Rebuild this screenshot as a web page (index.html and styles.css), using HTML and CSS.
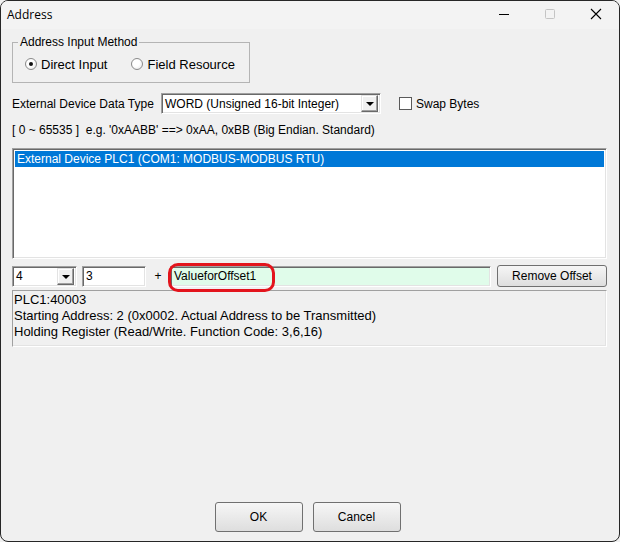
FILE: index.html
```html
<!DOCTYPE html>
<html lang="en">
<head>
    <meta charset="UTF-8">
    <title>Address</title>
    <link rel="stylesheet" href="styles.css">
</head>
<body>
    <div class="window">
        <!-- Bara de titlu -->
        <div class="titlebar">
            <span class="title">Address</span>
            <div class="caption-buttons">
                <span class="cap-btn">
                    <svg width="12" height="12" viewBox="0 0 12 12"><path d="M1 6.5 H11" stroke="#000" stroke-width="1"/></svg>
                </span>
                <span class="cap-btn">
                    <svg width="12" height="12" viewBox="0 0 12 12"><rect x="1.5" y="1.5" width="9" height="9" rx="1" fill="none" stroke="#c4c4c4"/></svg>
                </span>
                <span class="cap-btn">
                    <svg width="12" height="12" viewBox="0 0 12 12"><path d="M1 1 L11 11 M11 1 L1 11" stroke="#000" stroke-width="1.1"/></svg>
                </span>
            </div>
        </div>

        <div class="content">
            <fieldset class="group">
                <legend>Address Input Method</legend>
                <div class="radio-row">
                    <label class="radio-item"><span class="radio checked"></span>Direct Input</label>
                    <label class="radio-item"><span class="radio"></span>Field Resource</label>
                </div>
            </fieldset>

            <div class="type-row">
                <span class="type-label">External Device Data Type</span>
                <div class="combo sunken type-combo">
                    <span class="combo-text">WORD (Unsigned 16-bit Integer)</span>
                    <span class="combo-arrow"><span class="tri"></span></span>
                </div>
                <label class="check-item"><span class="checkbox"></span>Swap Bytes</label>
            </div>

            <div class="hint">[ 0 ~ 65535 ] &nbsp;e.g. '0xAABB' ==&gt; 0xAA, 0xBB (Big Endian. Standard)</div>

            <div class="listbox sunken">
                <div class="list-item selected">External Device PLC1 (COM1: MODBUS-MODBUS RTU)</div>
            </div>

            <div class="offset-row">
                <div class="combo sunken small-combo">
                    <span class="combo-text">4</span>
                    <span class="combo-arrow"><span class="tri"></span></span>
                </div>
                <div class="field sunken addr-field">3</div>
                <span class="plus">+</span>
                <div class="field sunken offset-field">
                    ValueforOffset1
                    <span class="marker"></span>
                </div>
                <button class="btn remove-btn">Remove Offset</button>
            </div>

            <div class="info">
                <div>PLC1:40003</div>
                <div>Starting Address: 2 (0x0002. Actual Address to be Transmitted)</div>
                <div>Holding Register (Read/Write. Function Code: 3,6,16)</div>
            </div>

            <div class="footer">
                <button class="btn dlg-btn">OK</button>
                <button class="btn dlg-btn">Cancel</button>
            </div>
        </div>
    </div>
</body>
</html>
```

FILE: styles.css
```css
body {
    margin: 0;
    background: #f0f0f0;
    font-family: 'Liberation Sans', Arial, sans-serif;
    font-size: 12px;
    color: #000;
}

.window {
    width: 620px;
    height: 542px;
    box-sizing: border-box;
    border: 1px solid #262626;
    border-radius: 8px;
    overflow: hidden;
    background: #f0f0f0;
    display: flex;
    flex-direction: column;
}

/* bara de titlu */
.titlebar {
    height: 28px;
    background: #f3f3f3;
    display: flex;
    align-items: center;
    justify-content: space-between;
    flex-shrink: 0;
}

.title {
    font-family: 'Open Sans', 'Noto Sans', sans-serif;
    font-size: 12px;
    padding-left: 6px;
    margin-top: -2px;
}

.caption-buttons {
    display: flex;
    margin-top: -2px;
}

.cap-btn {
    width: 46px;
    display: flex;
    justify-content: center;
}

.content {
    flex: 1;
    display: flex;
    flex-direction: column;
    padding: 0 12px 0 11px;
}

/* grupul de butoane radio */
.group {
    width: 238px;
    box-sizing: border-box;
    margin: 6px 0 0;
    padding: 7px 0 10px 12px;
    border: 1px solid #b4b4b4;
    border-radius: 0;
}

.group legend {
    padding: 0 2px;
    margin-left: -7px;
    line-height: 14px;
}

.radio-row {
    display: flex;
    gap: 24px;
    height: 16px;
    align-items: center;
    font-size: 13px;
}

.radio-item, .check-item {
    display: flex;
    align-items: center;
}

.radio {
    width: 12px;
    height: 12px;
    box-sizing: border-box;
    border: 1px solid #8a8a8a;
    border-radius: 50%;
    background: radial-gradient(circle at 40% 40%, #fff 40%, #e2e2e2);
    margin-right: 4px;
    position: relative;
}

.radio.checked::after {
    content: "";
    position: absolute;
    left: 3px;
    top: 3px;
    width: 4px;
    height: 4px;
    border-radius: 50%;
    background: #111;
}

.sunken {
    box-sizing: border-box;
    border: 1px solid;
    border-color: #a0a0a0 #fff #fff #a0a0a0;
    box-shadow: inset 1px 1px #696969, inset -1px -1px #e3e3e3;
    background: #fff;
}

.type-row {
    display: flex;
    align-items: center;
    margin-top: 10px;
    height: 21px;
}

.type-label {
    width: 149px;
    white-space: nowrap;
}

.combo {
    display: flex;
    align-items: center;
    justify-content: space-between;
    height: 21px;
    padding: 0 2px 0 3px;
}

.type-combo {
    width: 220px;
}

.combo-arrow {
    width: 17px;
    height: 17px;
    box-sizing: border-box;
    background: #f0f0f0;
    border: 1px solid;
    border-color: #e3e3e3 #696969 #696969 #e3e3e3;
    box-shadow: inset -1px -1px #a0a0a0, inset 1px 1px #fff;
    display: flex;
    align-items: center;
    justify-content: center;
}

.tri {
    width: 0;
    height: 0;
    border-left: 4px solid transparent;
    border-right: 4px solid transparent;
    border-top: 4px solid #000;
    margin-top: 1px;
}

.check-item {
    margin-left: 18px;
}

.checkbox {
    width: 13px;
    height: 13px;
    box-sizing: border-box;
    border: 1px solid #5a5a5a;
    background: #fff;
    margin-right: 4px;
}

.hint {
    margin-top: 9px;
    line-height: 14px;
}

.listbox {
    margin-top: 11px;
    height: 111px;
    padding: 2px;
}

.list-item {
    height: 16px;
    line-height: 16px;
    padding-left: 2px;
}

.list-item.selected {
    background: #0078d7;
    color: #fff;
}

.offset-row {
    display: flex;
    align-items: center;
    margin-top: 6px;
    height: 22px;
}

.small-combo {
    width: 65px;
}

.field {
    height: 21px;
    line-height: 19px;
    padding-left: 3px;
}

.addr-field {
    width: 64px;
    margin-left: 5px;
}

.plus {
    width: 24px;
    text-align: center;
}

.offset-field {
    width: 321px;
    background: #e0fcea;
    position: relative;
}

/* marcajul rosu peste camp */
.marker {
    position: absolute;
    left: -3px;
    top: -4px;
    width: 107px;
    height: 29px;
    box-sizing: border-box;
    border: 3px solid #e3141c;
    border-radius: 10px;
}

.btn {
    font-family: 'Liberation Sans', Arial, sans-serif;
    font-size: 12px;
    color: #000;
    background: linear-gradient(#f6f6f6, #dedede);
    border: 1px solid #707070;
    border-radius: 3px;
    padding: 0;
}

.remove-btn {
    width: 110px;
    height: 22px;
    margin-left: 6px;
}

.info {
    margin-top: 3px;
    height: 57px;
    box-sizing: border-box;
    border: 1px solid;
    border-color: #a0a0a0 #fff #fff #a0a0a0;
    box-shadow: inset -1px -1px #e3e3e3;
    padding: 1px 0 0 1px;
    line-height: 16px;
    font-size: 13px;
}

.footer {
    margin-top: auto;
    display: flex;
    justify-content: center;
    gap: 10px;
    padding: 0 4px 9px 0;
}

.dlg-btn {
    width: 88px;
    height: 30px;
}
```
